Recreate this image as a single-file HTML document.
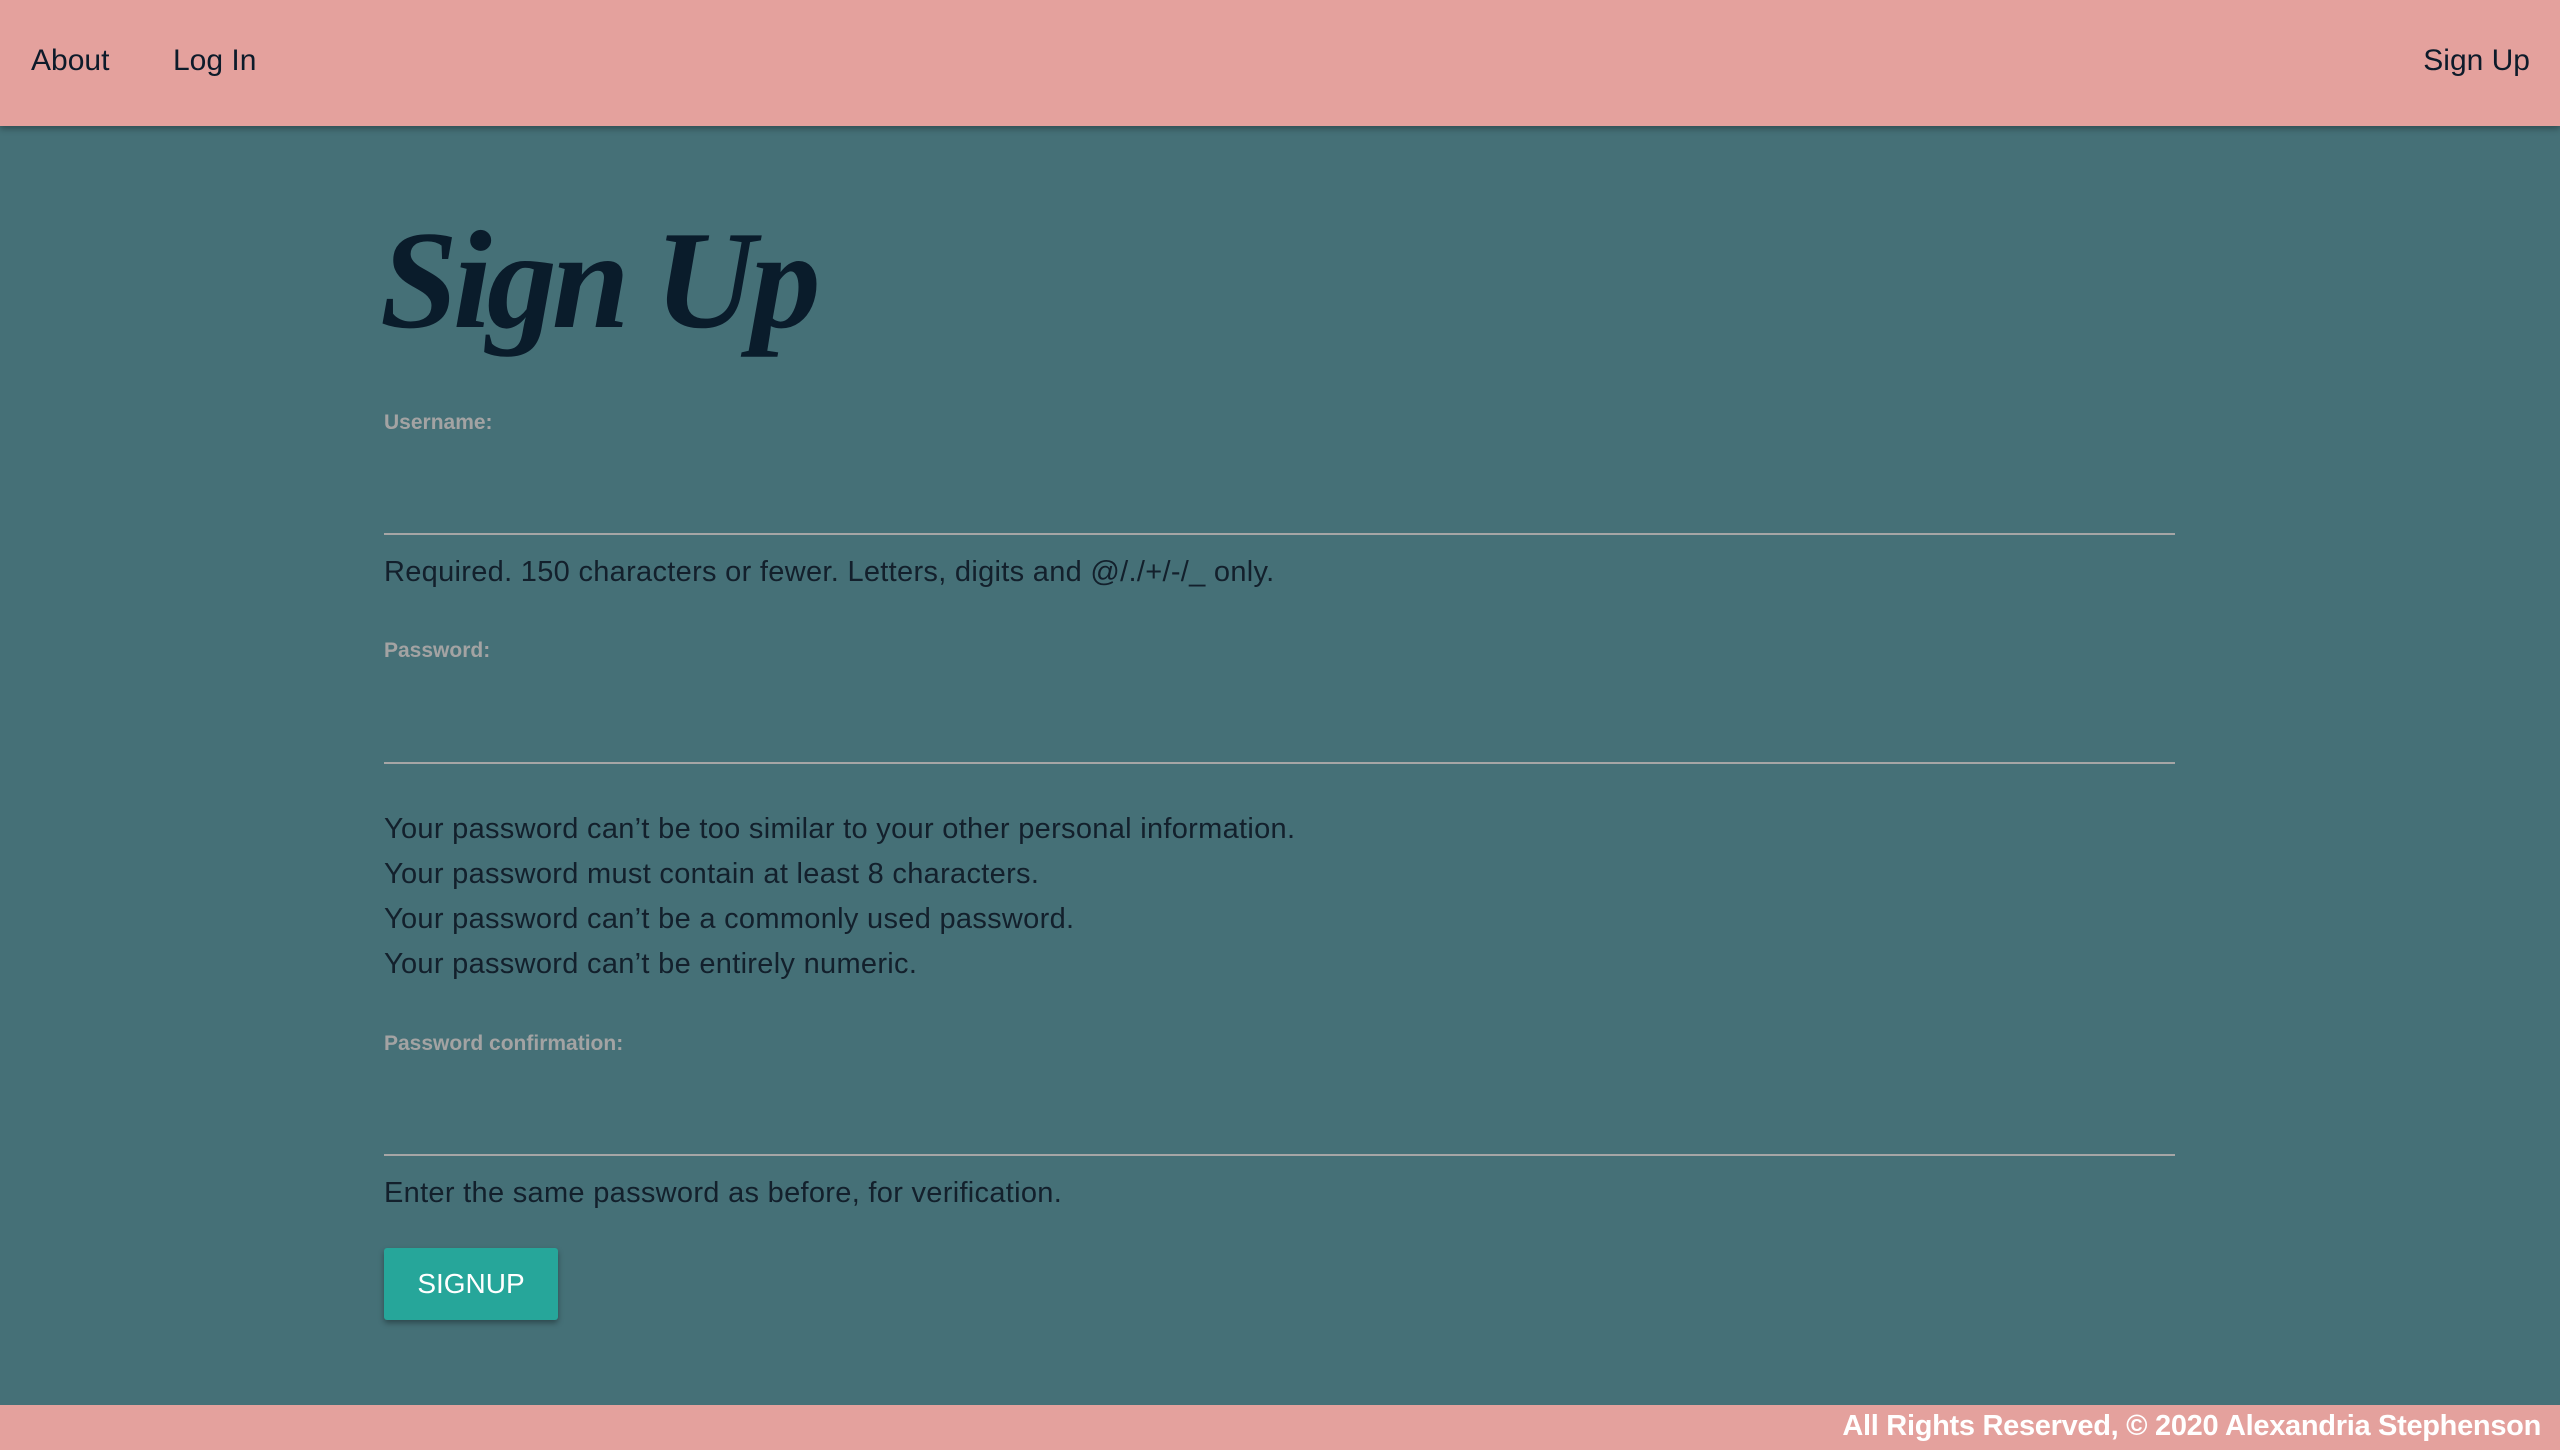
<!DOCTYPE html>
<html><head><meta charset="utf-8">
<style>
html,body{margin:0;padding:0;width:2560px;height:1450px;overflow:hidden;background:#457077;font-family:"Liberation Sans",sans-serif;}
.nav{position:absolute;left:0;top:0;width:2560px;height:126px;background:#e4a19d;box-shadow:0 3px 6px rgba(0,0,0,.3);z-index:2}
.nav a{position:absolute;top:44px;font-size:30px;color:#0d1b2a;text-decoration:none}
h1{position:absolute;left:380px;top:200px;margin:0;font-family:"Liberation Serif",serif;font-weight:bold;font-style:italic;font-size:140px;color:#0a1c2b;letter-spacing:-5px}
.lbl{position:absolute;left:384px;font-size:21px;color:#a3a3a3;font-weight:bold}
.line{position:absolute;left:384px;width:1791px;height:2px;background:#a6a6a6}
.t{position:absolute;left:384px;font-size:29px;letter-spacing:0.3px;color:#13202c;white-space:nowrap}
.btn{position:absolute;left:384px;top:1248px;width:174px;height:72px;background:#26a69a;border-radius:3px;box-shadow:0 3px 6px rgba(0,0,0,.35);color:#fff;font-size:28px;text-align:center;line-height:72px}
.foot{position:absolute;left:0;top:1405px;width:2560px;height:45px;background:#e4a19d}
.foot span{position:absolute;right:19px;top:5px;font-size:29px;font-weight:bold;color:#fff;white-space:nowrap;letter-spacing:-0.3px}
</style></head><body>
<div class="nav"><a style="left:31px">About</a><a style="left:173px">Log In</a><a style="right:30px">Sign Up</a></div>
<h1>Sign Up</h1>
<div class="lbl" style="top:411px">Username:</div>
<div class="line" style="top:533px"></div>
<div class="t" style="top:556px">Required. 150 characters or fewer. Letters, digits and @/./+/-/_ only.</div>
<div class="lbl" style="top:639px">Password:</div>
<div class="line" style="top:762px"></div>
<div class="t" style="top:813px">Your password can’t be too similar to your other personal information.</div>
<div class="t" style="top:858px">Your password must contain at least 8 characters.</div>
<div class="t" style="top:903px">Your password can’t be a commonly used password.</div>
<div class="t" style="top:948px">Your password can’t be entirely numeric.</div>
<div class="lbl" style="top:1032px">Password confirmation:</div>
<div class="line" style="top:1154px"></div>
<div class="t" style="top:1177px">Enter the same password as before, for verification.</div>
<div class="btn">SIGNUP</div>
<div class="foot"><span>All Rights Reserved, © 2020 Alexandria Stephenson</span></div>
</body></html>
